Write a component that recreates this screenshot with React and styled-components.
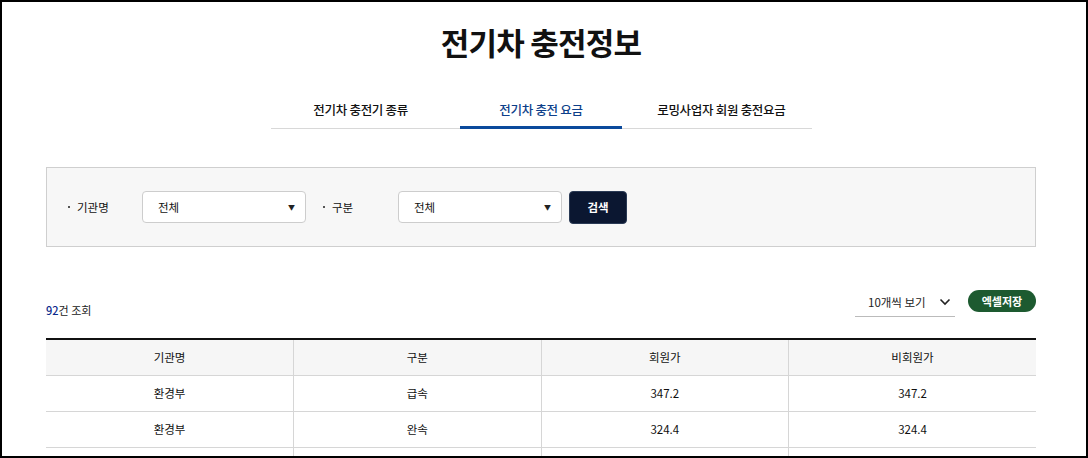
import React from "react";
import styled, { createGlobalStyle } from "styled-components";

const Global = createGlobalStyle`
  html, body { margin: 0; padding: 0; background: #fff; }
  body { font-family: "Noto Sans CJK KR", "Noto Sans", sans-serif; color: #111; }
  * { box-sizing: border-box; }
`;

const Frame = styled.div`
  width: 1088px;
  height: 458px;
  border: 2px solid #000;
  overflow: hidden;
  padding-left: 44px;
`;

const Container = styled.div`
  width: 990px;
  display: flex;
  flex-direction: column;
  align-items: stretch;
`;

const Title = styled.h1`
  margin: 18px 0 0;
  font-size: 31px;
  line-height: 44px;
  font-weight: 700;
  text-align: center;
  letter-spacing: -0.8px;
  color: #111;
`;

const Tabs = styled.div`
  align-self: center;
  width: 541px;
  margin-top: 29px;
  display: grid;
  grid-template-columns: repeat(3, 1fr);
  border-bottom: 1px solid #d8d8d8;
`;

const Tab = styled.div`
  height: 36px;
  margin: 0 9px;
  display: flex;
  align-items: center;
  justify-content: center;
  font-size: 12.5px;
  font-weight: 500;
  letter-spacing: -0.3px;
  color: ${(p) => (p.$active ? "#0d3f8a" : "#111")};
  border-bottom: 3px solid ${(p) => (p.$active ? "#0b4a9c" : "transparent")};
  margin-bottom: -1px;
`;

const SearchBox = styled.div`
  margin-top: 38px;
  height: 80px;
  background: #f7f7f7;
  border: 1px solid #cfcfcf;
  display: flex;
  align-items: center;
  padding-left: 21px;
`;

const Label = styled.span`
  display: flex;
  align-items: center;
  width: ${(p) => p.$w}px;
  font-size: 11.5px;
  color: #111;
  &::before {
    content: "";
    width: 2px;
    height: 2px;
    background: #555;
    margin-right: 7px;
  }
`;

const FakeSelect = styled.div`
  width: 164px;
  height: 32px;
  background: #fff;
  border: 1px solid #cdcdcd;
  border-radius: 4px;
  display: flex;
  align-items: center;
  justify-content: space-between;
  padding: 0 10px 0 15px;
  font-size: 11.5px;
  margin-right: ${(p) => p.$mr || 0}px;
`;

const Arrow = styled.span`
  font-size: 7px;
  color: #222;
`;

const SearchButton = styled.button`
  margin-left: 7px;
  width: 58px;
  height: 33px;
  border: 1px solid #2a3a55;
  border-radius: 4px;
  background: #0b1731;
  color: #fff;
  font-family: inherit;
  font-size: 11.5px;
  font-weight: 700;
`;

const ListHead = styled.div`
  margin-top: 43px;
  height: 27px;
  display: flex;
  align-items: flex-start;
  justify-content: space-between;
`;

const Count = styled.div`
  margin-top: 12px;
  font-size: 11px;
  color: #222;
  span { color: #0b2a8c; font-weight: 500; }
`;

const Tools = styled.div`
  display: flex;
  align-items: flex-start;
  gap: 13px;
`;

const PageSize = styled.div`
  width: 100px;
  height: 27px;
  border-bottom: 1px solid #bbb;
  display: flex;
  align-items: center;
  justify-content: space-between;
  padding: 0 4px 3px 13px;
  font-size: 11.5px;
  color: #222;
`;

const ExcelButton = styled.button`
  width: 68px;
  height: 22px;
  border: none;
  border-radius: 11px;
  background: #1d5a30;
  color: #fff;
  font-family: inherit;
  font-size: 11px;
  font-weight: 700;
  padding: 0;
`;

const Table = styled.table`
  margin-top: 21px;
  width: 990px;
  border-collapse: collapse;
  table-layout: fixed;
  border-top: 2px solid #111;
`;

const Th = styled.th`
  height: 36px;
  background: #f6f6f6;
  font-weight: 400;
  font-size: 11.5px;
  color: #111;
  border-bottom: 1px solid #d6d6d6;
  border-left: 1px solid #d6d6d6;
  &:first-child { border-left: none; }
`;

const Td = styled.td`
  height: 36px;
  text-align: center;
  font-size: 11.5px;
  color: #111;
  border-bottom: 1px solid #d6d6d6;
  border-left: 1px solid #d6d6d6;
  &:first-child { border-left: none; }
`;

const rows = [
  ["환경부", "급속", "347.2", "347.2"],
  ["환경부", "완속", "324.4", "324.4"],
  ["", "", "", ""],
];

export default function App() {
  return (
    <>
      <Global />
      <Frame>
        <Container>
          <Title>전기차 충전정보</Title>
          <Tabs>
            <Tab>전기차 충전기 종류</Tab>
            <Tab $active>전기차 충전 요금</Tab>
            <Tab>로밍사업자 회원 충전요금</Tab>
          </Tabs>
          <SearchBox>
            <Label $w={74}>기관명</Label>
            <FakeSelect $mr={17}>
              전체<Arrow>▼</Arrow>
            </FakeSelect>
            <Label $w={75}>구분</Label>
            <FakeSelect>
              전체<Arrow>▼</Arrow>
            </FakeSelect>
            <SearchButton>검색</SearchButton>
          </SearchBox>
          <ListHead>
            <Count>
              <span>92</span>건 조회
            </Count>
            <Tools>
              <PageSize>
                10개씩 보기
                <svg width="12" height="8" viewBox="0 0 12 8">
                  <path d="M1.5 1.5 L6 6 L10.5 1.5" fill="none" stroke="#222" strokeWidth="1.6" />
                </svg>
              </PageSize>
              <ExcelButton>엑셀저장</ExcelButton>
            </Tools>
          </ListHead>
          <Table>
            <thead>
              <tr>
                <Th>기관명</Th>
                <Th>구분</Th>
                <Th>회원가</Th>
                <Th>비회원가</Th>
              </tr>
            </thead>
            <tbody>
              {rows.map((r, i) => (
                <tr key={i}>
                  {r.map((c, j) => (
                    <Td key={j}>{c}</Td>
                  ))}
                </tr>
              ))}
            </tbody>
          </Table>
        </Container>
      </Frame>
    </>
  );
}
